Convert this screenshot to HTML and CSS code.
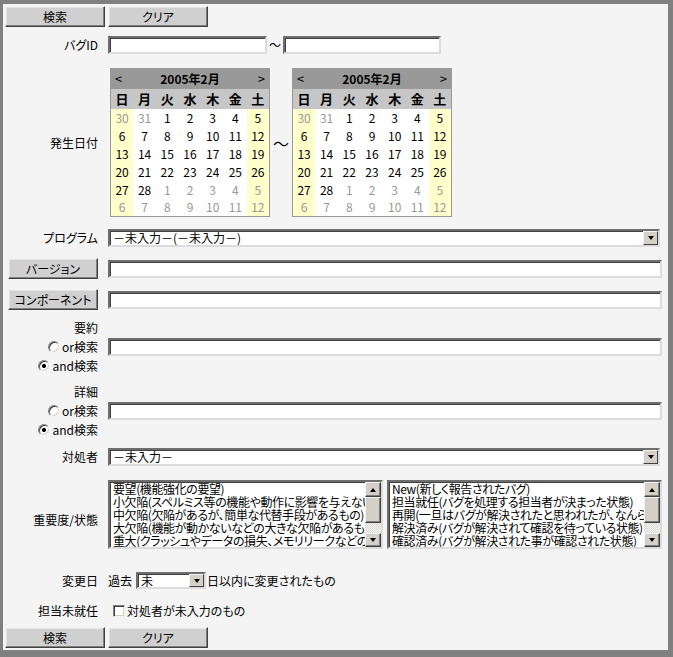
FILE: index.html
```html
<!DOCTYPE html>
<html lang="ja">
<head>
<meta charset="utf-8">
<title>バグ検索</title>
<link rel="stylesheet" href="styles.css">
</head>
<body>
<form class="frame">
  <div class="toolbar">
    <button type="button" class="btn btn-main">検索</button>
    <button type="button" class="btn btn-main">クリア</button>
  </div>

  <div class="row row-id">
    <span class="lbl">バグID</span>
    <div class="field range">
      <input class="text id-from" type="text">
      <span class="tilde">～</span>
      <input class="text id-to" type="text">
    </div>
  </div>

  <div class="row row-cal">
    <span class="lbl">発生日付</span>
    <div class="field cals">
      <table class="cal">
        <tr class="cal-head"><th class="nav prev">&lt;</th><th colspan="5" class="title">2005年2月</th><th class="nav next">&gt;</th></tr>
        <tr class="cal-days"><th>日</th><th>月</th><th>火</th><th>水</th><th>木</th><th>金</th><th>土</th></tr>
        <tr><td class="we other">30</td><td class="other">31</td><td>1</td><td>2</td><td>3</td><td>4</td><td class="we">5</td></tr>
        <tr><td class="we">6</td><td>7</td><td>8</td><td>9</td><td>10</td><td>11</td><td class="we">12</td></tr>
        <tr><td class="we">13</td><td>14</td><td>15</td><td>16</td><td>17</td><td>18</td><td class="we">19</td></tr>
        <tr><td class="we">20</td><td>21</td><td>22</td><td>23</td><td>24</td><td>25</td><td class="we">26</td></tr>
        <tr><td class="we">27</td><td>28</td><td class="other">1</td><td class="other">2</td><td class="other">3</td><td class="other">4</td><td class="we other">5</td></tr>
        <tr><td class="we other">6</td><td class="other">7</td><td class="other">8</td><td class="other">9</td><td class="other">10</td><td class="other">11</td><td class="we other">12</td></tr>
      </table>
      <span class="tilde cal-tilde">～</span>
      <table class="cal">
        <tr class="cal-head"><th class="nav prev">&lt;</th><th colspan="5" class="title">2005年2月</th><th class="nav next">&gt;</th></tr>
        <tr class="cal-days"><th>日</th><th>月</th><th>火</th><th>水</th><th>木</th><th>金</th><th>土</th></tr>
        <tr><td class="we other">30</td><td class="other">31</td><td>1</td><td>2</td><td>3</td><td>4</td><td class="we">5</td></tr>
        <tr><td class="we">6</td><td>7</td><td>8</td><td>9</td><td>10</td><td>11</td><td class="we">12</td></tr>
        <tr><td class="we">13</td><td>14</td><td>15</td><td>16</td><td>17</td><td>18</td><td class="we">19</td></tr>
        <tr><td class="we">20</td><td>21</td><td>22</td><td>23</td><td>24</td><td>25</td><td class="we">26</td></tr>
        <tr><td class="we">27</td><td>28</td><td class="other">1</td><td class="other">2</td><td class="other">3</td><td class="other">4</td><td class="we other">5</td></tr>
        <tr><td class="we other">6</td><td class="other">7</td><td class="other">8</td><td class="other">9</td><td class="other">10</td><td class="other">11</td><td class="we other">12</td></tr>
      </table>
    </div>
  </div>

  <div class="row row-program">
    <span class="lbl">プログラム</span>
    <div class="combo combo-wide">
      <span class="combo-text">－未入力－(－未入力－)</span>
      <span class="combo-btn"><span class="arrow-down"></span></span>
    </div>
  </div>

  <div class="row row-version">
    <button type="button" class="btn btn-side">バージョン</button>
    <input class="text full" type="text">
  </div>

  <div class="row row-component">
    <button type="button" class="btn btn-side">コンポーネント</button>
    <input class="text full" type="text">
  </div>

  <div class="block block-summary">
    <span class="lbl">要約</span>
    <span></span>
    <label class="lbl opt"><input type="radio" name="summary">or検索</label>
    <input class="text full" type="text">
    <label class="lbl opt"><input type="radio" name="summary" checked>and検索</label>
  </div>

  <div class="block block-detail">
    <span class="lbl">詳細</span>
    <span></span>
    <label class="lbl opt"><input type="radio" name="detail">or検索</label>
    <input class="text full" type="text">
    <label class="lbl opt"><input type="radio" name="detail" checked>and検索</label>
  </div>

  <div class="row row-owner">
    <span class="lbl">対処者</span>
    <div class="combo combo-wide">
      <span class="combo-text">－未入力－</span>
      <span class="combo-btn"><span class="arrow-down"></span></span>
    </div>
  </div>

  <div class="row row-lists">
    <span class="lbl lbl-lists">重要度/状態</span>
    <div class="field lists">
      <div class="listbox">
        <ul class="options">
          <li>要望(機能強化の要望)</li>
          <li>小欠陥(スペルミス等の機能や動作に影響を与えない、</li>
          <li>中欠陥(欠陥があるが、簡単な代替手段があるもの)</li>
          <li>大欠陥(機能が動かないなどの大きな欠陥があるもの)</li>
          <li>重大(クラッシュやデータの損失、メモリリークなどの重大</li>
        </ul>
        <div class="vscroll">
          <span class="sb-btn sb-up"><span class="arrow-up"></span></span>
          <span class="sb-thumb"></span>
          <span class="sb-track"></span>
          <span class="sb-btn sb-down"><span class="arrow-down"></span></span>
        </div>
      </div>
      <div class="listbox">
        <ul class="options">
          <li>New(新しく報告されたバグ)</li>
          <li>担当就任(バグを処理する担当者が決まった状態)</li>
          <li>再開(一旦はバグが解決されたと思われたが、なんらか</li>
          <li>解決済み(バグが解決されて確認を待っている状態)</li>
          <li>確認済み(バグが解決された事が確認された状態)</li>
        </ul>
        <div class="vscroll">
          <span class="sb-btn sb-up"><span class="arrow-up"></span></span>
          <span class="sb-thumb"></span>
          <span class="sb-track"></span>
          <span class="sb-btn sb-down"><span class="arrow-down"></span></span>
        </div>
      </div>
    </div>
  </div>

  <div class="row row-changed">
    <span class="lbl">変更日</span>
    <div class="field inline">
      <span>過去</span>
      <div class="combo combo-days">
        <span class="combo-text">未</span>
        <span class="combo-btn"><span class="arrow-down"></span></span>
      </div>
      <span>日以内に変更されたもの</span>
    </div>
  </div>

  <div class="row row-unassigned">
    <span class="lbl">担当未就任</span>
    <label class="field check"><input type="checkbox">対処者が未入力のもの</label>
  </div>

  <div class="toolbar toolbar-bottom">
    <button type="button" class="btn btn-main">検索</button>
    <button type="button" class="btn btn-main">クリア</button>
  </div>
</form>
</body>
</html>
```
FILE: styles.css
```css
* { box-sizing: border-box; }

html, body {
  margin: 0;
  padding: 0;
  background: #808080;
}

body {
  font-family: "Noto Sans CJK JP", "Noto Sans", sans-serif;
  font-size: 12px;
  line-height: 14px;
  color: #000;
  font-feature-settings: "palt";
}

.frame {
  width: 673px;
  height: 657px;
  margin: 0;
  border-style: solid;
  border-color: #808080;
  border-width: 4px 5px 7px 3px;
  background: #f4f4f4;
  padding-left: 2px;
  display: flex;
  flex-direction: column;
}

/* buttons */
.toolbar {
  display: flex;
  gap: 3px;
  margin-top: 2px;
}
.toolbar-bottom { margin-top: 7px; }

.btn {
  font: inherit;
  font-feature-settings: "palt";
  color: #000;
  background: #d0d0d0;
  border: 1px solid;
  border-color: #f4f4f4 #404040 #404040 #f4f4f4;
  box-shadow: inset -1px -1px #808080, inset 1px 1px #e4e4e4;
  padding: 0;
  margin: 0;
  height: 21px;
  display: flex;
  align-items: center;
  justify-content: center;
}
.btn-main { width: 100px; }
.btn-side { width: 90px; justify-self: end; }

/* rows */
.row {
  display: grid;
  grid-template-columns: 93px 554px;
  column-gap: 10px;
  align-items: center;
}
.lbl {
  justify-self: end;
  text-align: right;
  white-space: nowrap;
}

.row-id { margin-top: 9px; }
.row-cal { margin-top: 14px; }
.row-program { margin-top: 12px; }
.row-version { margin-top: 11px; }
.row-component { margin-top: 10px; }
.block-summary { margin-top: 8px; }
.block-detail { margin-top: 6px; }
.row-owner { margin-top: 8px; }
.row-lists { margin-top: 14px; }
.row-changed { margin-top: 23px; }
.row-unassigned { margin-top: 13px; height: 18px; }

/* text inputs */
.text {
  font: inherit;
  height: 18px;
  margin: 0;
  padding: 0 2px;
  background: #fff;
  border: 2px solid;
  border-color: #6e6e6e #dcdcdc #dcdcdc #6e6e6e;
  box-shadow: inset 1px 1px #404040;
}
.full { width: 554px; }

.range {
  display: flex;
  align-items: center;
}
.id-from { width: 159px; }
.id-to { width: 158px; }
.tilde {
  width: 16px;
  text-align: center;
}

/* calendars */
.cals {
  display: flex;
  align-items: center;
  margin-left: 2px;
}
.cal-tilde {
  width: 22px;
  font-size: 16px;
}
.cal {
  width: 160px;
  border-collapse: collapse;
  table-layout: fixed;
  border: 1px solid #999;
  background: #fff;
}
.cal th, .cal td {
  padding: 0;
  text-align: center;
}
.cal td {
  height: 18px;
  font-size: 12px;
}
.cal-head th {
  background: #999;
  height: 20px;
  font-weight: bold;
}
.cal-head .nav {
  font-weight: normal;
  font-size: 13px;
}
.cal-head .prev { text-align: left; padding-left: 4px; }
.cal-head .next { text-align: right; padding-right: 4px; }
.cal-days th {
  background: #c6c6c6;
  height: 20px;
  font-size: 13px;
  font-weight: bold;
}
.cal td.we { background: #ffffcc; }
.cal td.other { color: #999; }

/* combo boxes */
.combo {
  display: flex;
  align-items: center;
  height: 18px;
  background: #fff;
  border: 2px solid;
  border-color: #6e6e6e #dcdcdc #dcdcdc #6e6e6e;
  box-shadow: inset 1px 1px #404040;
}
.combo-wide { width: 552px; }
.combo-days { width: 70px; margin: 0 1px 0 4px; height: 17px; }
.combo-text {
  flex: 1;
  padding-left: 3px;
  white-space: nowrap;
  line-height: 14px;
}
.combo-btn {
  width: 15px;
  height: 14px;
  background: #d4d0c8;
  border: 1px solid;
  border-color: #f4f4f4 #404040 #404040 #f4f4f4;
  display: flex;
  align-items: center;
  justify-content: center;
}
.combo-days .combo-btn { height: 13px; }

.arrow-down, .arrow-up {
  width: 0;
  height: 0;
  border-left: 3.5px solid transparent;
  border-right: 3.5px solid transparent;
}
.arrow-down { border-top: 4px solid #000; }
.arrow-up { border-bottom: 4px solid #000; }

/* option blocks */
.block {
  display: grid;
  grid-template-columns: 93px 554px;
  grid-template-rows: 19px 19px 20px;
  column-gap: 10px;
  align-items: center;
}
.opt {
  display: flex;
  align-items: center;
  gap: 2px;
}
input[type="radio"] {
  appearance: none;
  -webkit-appearance: none;
  width: 12px;
  height: 12px;
  margin: 0;
  border-radius: 50%;
  border: 1px solid;
  border-color: #808080 #f4f4f4 #f4f4f4 #808080;
  box-shadow: inset 1px 1px #404040, inset -1px -1px #d4d0c8;
  background: #fff;
}
input[type="radio"]:checked {
  background: radial-gradient(circle, #000 0 1.8px, #fff 2.3px);
}

/* list boxes */
.lbl-lists { padding-top: 10px; }
.lists {
  display: flex;
  gap: 4px;
}
.listbox {
  display: flex;
  width: 275px;
  height: 69px;
  background: #fff;
  border: 2px solid;
  border-color: #6e6e6e #dcdcdc #dcdcdc #6e6e6e;
  box-shadow: inset 1px 1px #404040;
}
.options {
  flex: 1;
  min-width: 0;
  margin: 0;
  padding: 0 0 0 3px;
  list-style: none;
  overflow: hidden;
  white-space: nowrap;
  line-height: 13px;
  letter-spacing: -0.4px;
}
.vscroll {
  width: 16px;
  flex: none;
  display: flex;
  flex-direction: column;
}
.sb-btn, .sb-thumb {
  background: #d4d0c8;
  border: 1px solid;
  border-color: #f4f4f4 #404040 #404040 #f4f4f4;
  box-shadow: inset -1px -1px #808080;
}
.sb-btn {
  display: flex;
  align-items: center;
  justify-content: center;
}
.sb-up { height: 15px; }
.sb-thumb { height: 26px; }
.sb-track {
  flex: 1;
  background: repeating-conic-gradient(#ffffff 0 25%, #d4d0c8 0 50%) 0 0 / 2px 2px;
}
.sb-down { height: 14px; }

/* changed date row */
.inline {
  display: flex;
  align-items: center;
  white-space: nowrap;
}

/* checkbox */
.check {
  display: flex;
  align-items: center;
  gap: 2px;
  padding-left: 5px;
}
input[type="checkbox"] {
  appearance: none;
  -webkit-appearance: none;
  width: 12px;
  height: 12px;
  margin: 0;
  border: 1px solid;
  border-color: #808080 #f4f4f4 #f4f4f4 #808080;
  box-shadow: inset 1px 1px #404040, inset -1px -1px #d4d0c8;
  background: #fff;
}
```
